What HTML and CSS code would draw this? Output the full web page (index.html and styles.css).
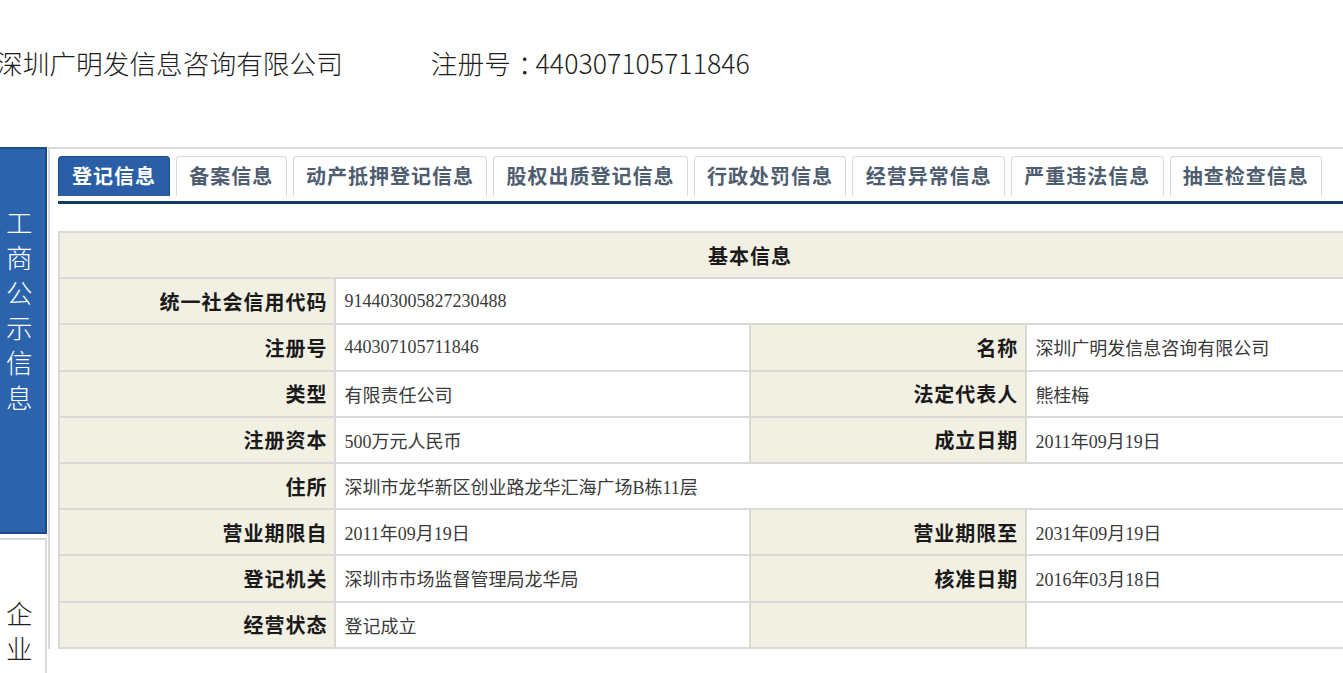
FILE: index.html
```html
<!DOCTYPE html>
<html lang="zh-CN">
<head>
    <meta charset="UTF-8">
    <title>深圳广明发信息咨询有限公司</title>
    <link rel="stylesheet" href="styles.css">
</head>
<body>
    <!-- Company title -->
    <div class="title">
        <span class="title-name">深圳广明发信息咨询有限公司</span>
        <span class="title-regno">注册号<span class="colon">：</span>440307105711846</span>
    </div>

    <div class="layout">
        <!-- Left side menu -->
        <div class="sidebar">
            <div class="side-box active">工商公示信息</div>
            <div class="side-box">企业</div>
        </div>

        <div class="main">
            <!-- Tabs -->
            <div class="tabs">
                <div class="tab active">登记信息</div>
                <div class="tab">备案信息</div>
                <div class="tab">动产抵押登记信息</div>
                <div class="tab">股权出质登记信息</div>
                <div class="tab">行政处罚信息</div>
                <div class="tab">经营异常信息</div>
                <div class="tab">严重违法信息</div>
                <div class="tab">抽查检查信息</div>
            </div>
            <div class="tab-line"></div>

            <!-- Basic info table -->
            <table class="info">
                <colgroup>
                    <col class="col-label">
                    <col class="col-value">
                    <col class="col-label">
                    <col class="col-value">
                </colgroup>
                <tr>
                    <th colspan="4">基本信息</th>
                </tr>
                <tr>
                    <td class="label">统一社会信用代码</td>
                    <td class="value" colspan="3">914403005827230488</td>
                </tr>
                <tr>
                    <td class="label">注册号</td>
                    <td class="value">440307105711846</td>
                    <td class="label">名称</td>
                    <td class="value">深圳广明发信息咨询有限公司</td>
                </tr>
                <tr>
                    <td class="label">类型</td>
                    <td class="value">有限责任公司</td>
                    <td class="label">法定代表人</td>
                    <td class="value">熊桂梅</td>
                </tr>
                <tr>
                    <td class="label">注册资本</td>
                    <td class="value">500万元人民币</td>
                    <td class="label">成立日期</td>
                    <td class="value">2011年09月19日</td>
                </tr>
                <tr>
                    <td class="label">住所</td>
                    <td class="value" colspan="3">深圳市龙华新区创业路龙华汇海广场B栋11层</td>
                </tr>
                <tr>
                    <td class="label">营业期限自</td>
                    <td class="value">2011年09月19日</td>
                    <td class="label">营业期限至</td>
                    <td class="value">2031年09月19日</td>
                </tr>
                <tr>
                    <td class="label">登记机关</td>
                    <td class="value">深圳市市场监督管理局龙华局</td>
                    <td class="label">核准日期</td>
                    <td class="value">2016年03月18日</td>
                </tr>
                <tr>
                    <td class="label">经营状态</td>
                    <td class="value">登记成立</td>
                    <td class="label"></td>
                    <td class="value"></td>
                </tr>
            </table>
        </div>
    </div>
</body>
</html>
```

FILE: styles.css
```css
/* General */
html, body {
    margin: 0;
    overflow: hidden;
    background: #ffffff;
}

body {
    font-family: "Noto Sans CJK SC", sans-serif;
    color: #222222;
}

/* Title bar */
.title {
    height: 147px;
    padding-top: 43px;
    box-sizing: border-box;
    font-size: 26.7px;
    font-weight: 300;
    line-height: 40px;
    white-space: nowrap;
    color: #1e1e1e;
}

.title-name {
    margin-left: -4px;
}

.title-regno {
    margin-left: 82px;
}

.colon {
    padding-left: 7px;
    letter-spacing: -9px;
}

/* Layout */
.layout {
    display: flex;
    align-items: flex-start;
}

.sidebar {
    flex: none;
    width: 47px;
    margin-right: 1px;
}

.side-box {
    box-sizing: border-box;
    height: 387px;
    padding: 55px 0 0 6px;
    font-size: 26.5px;
    font-weight: 300;
    line-height: 35px;
    border-right: 2px solid #d8d8d8;
    border-top: 2px solid #d8d8d8;
    margin-top: 4px;
    color: #1e1e1e;
}

.side-box.active {
    background: #2b63ad;
    color: #ffffff;
    border-right-color: #1b4a88;
    border-top-color: #1b4a88;
    border-bottom: 2px solid #1b4a88;
    margin-top: 0;
}

.main {
    flex: none;
    width: 1420px;
    border-left: 2px solid #dadada;
    border-top: 2px solid #dadada;
    padding: 7px 0 0 8px;
}

/* Tabs */
.tabs {
    display: flex;
    gap: 6px;
    height: 40px;
}

.tab {
    box-sizing: border-box;
    height: 40px;
    padding: 0 12.3px;
    border: 1px solid #d9d9d9;
    border-bottom: none;
    border-radius: 4px 4px 0 0;
    font-size: 20px;
    font-weight: bold;
    letter-spacing: 1px;
    line-height: 38px;
    color: #4e5d70;
    background: #ffffff;
    white-space: nowrap;
}

.tab.active {
    padding: 0 13px;
    background: #2a5fa8;
    border-color: #1d4c8b;
    color: #ffffff;
}

.tab-line {
    margin-top: 5px;
    height: 3px;
    background: #103b66;
}

/* Info table */
.info {
    margin-top: 27px;
    width: 1384px;
    table-layout: fixed;
    border-collapse: collapse;
}

.col-label {
    width: 20%;
}

.col-value {
    width: 30%;
}

.info th,
.info td {
    height: 44.2px;
    padding: 0;
    border: 2px solid #d9d9d6;
    white-space: nowrap;
}

.info th {
    background: #f1f0e3;
    font-size: 20px;
    font-weight: bold;
    letter-spacing: 1px;
    color: #1a1a1a;
    text-align: center;
}

.info .label {
    background: #f1f0e3;
    font-size: 20px;
    font-weight: bold;
    letter-spacing: 1px;
    text-align: right;
    padding-right: 7px;
    color: #1a1a1a;
}

.info .value {
    font-family: "Liberation Serif", "Noto Sans CJK SC", serif;
    font-size: 18px;
    color: #3a3a3a;
    padding-left: 8px;
}
```
